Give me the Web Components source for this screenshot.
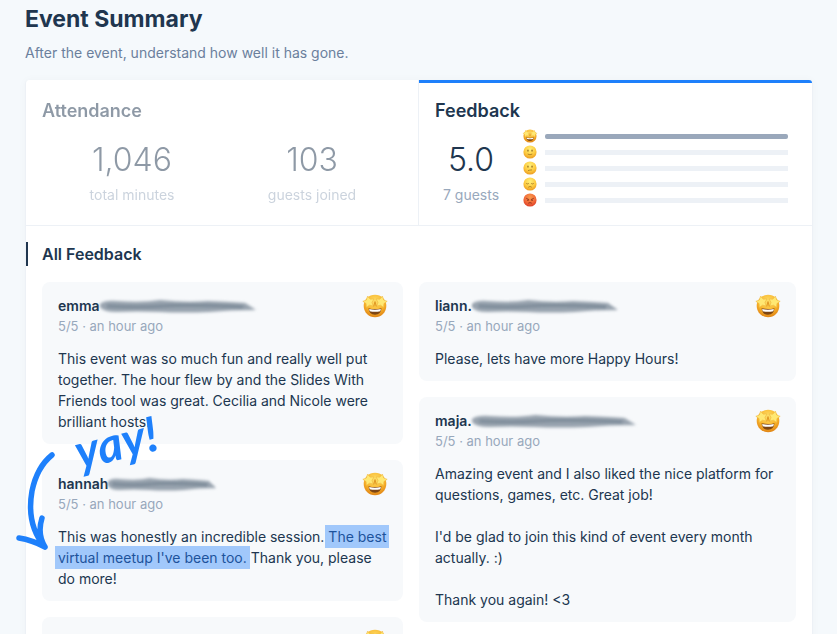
<!DOCTYPE html>
<html lang="en">
<head>
<meta charset="utf-8">
<meta name="viewport" content="width=device-width, initial-scale=1">
<title>Event Summary</title>
<style>
  :root {
    --ink: #20364f;
    --muted: #6b809c;
    --soft: #98a8bc;
    --line: #edf1f6;
    --card: #f7f9fb;
    --blue: #1e80fb;
  }

  body {
    margin: 0;
    background: #f5f9fc;
    color: var(--ink);
    font-family: Inter, "Liberation Sans", sans-serif;
    font-size: 14px;
    line-height: 21px;
  }
</style>
</head>
<body>
<event-summary>
  <span slot="title">Event Summary</span>
  <span slot="subtitle">After the event, understand how well it has gone.</span>

  <summary-tab slot="tabs" label="Attendance">
    <stat-value value="1,046">total minutes</stat-value>
    <stat-value value="103">guests joined</stat-value>
  </summary-tab>
  <summary-tab slot="tabs" label="Feedback" active>
    <stat-value class="score" value="5.0">7 guests</stat-value>
    <rating-bars></rating-bars>
  </summary-tab>

  <span slot="section">All Feedback</span>

  <feedback-card slot="left" name="emma" smudge="158">This event was so much fun and really well put together. The hour flew by and the Slides With Friends tool was great. Cecilia and Nicole were brilliant hosts.</feedback-card>
  <feedback-card slot="left" name="hannah" smudge="110">This was honestly an incredible session. <text-highlight>The best virtual meetup I've been too.</text-highlight> Thank you, please do more!<pen-note slot="note">yay!</pen-note></feedback-card>
  <feedback-card slot="left" name="" smudge="0"></feedback-card>

  <feedback-card slot="right" name="liann." smudge="148">Please, lets have more Happy Hours!</feedback-card>
  <feedback-card slot="right" name="maja." smudge="166">Amazing event and I also liked the nice platform for questions, games, etc. Great job!<br><br>I'd be glad to join this kind of event every month actually. :)<br><br>Thank you again! &lt;3</feedback-card>
</event-summary>

<script>
const STAR = "0,-6 2,-2.500 5.700,-1.900 3,1 3.500,4.900 0,3.200 -3.500,4.900 -3,1 -5.700,-1.900 -2,-2.500";

const FACES = {
  starstruck: /* html */`
    <path d="M5.500 14.200q6.500 1.800 13 0q-.6 6.500-6.500 6.500t-6.500-6.500z" fill="#7d4512"/>
    <path d="M6.100 14.900q5.900 1.500 11.800 0l-.6 2.300q-5.300 1-10.600 0z" fill="#fff"/>
    <g fill="#ffe873" stroke="#eeb23a" stroke-width=".5" stroke-linejoin="round">
      <polygon points="${STAR}" transform="translate(5.800 8) rotate(-12)"/>
      <polygon points="${STAR}" transform="translate(18.200 8) rotate(12)"/>
    </g>
    <path d="M10.800 12.500L12 7.500l1.200 5" fill="none" stroke="#d98a16" stroke-width=".8"/>`,
  happy: /* html */`
    <g opacity=".75"><ellipse cx="8.500" cy="9.500" rx="1.200" ry="2" fill="#7c5012"/><ellipse cx="15.500" cy="9.500" rx="1.200" ry="2" fill="#7c5012"/>
    <path d="M8 15.500q4 2.500 8 0" fill="none" stroke="#7c5012" stroke-width="1.300"/></g>`,
  unsure: /* html */`
    <g opacity=".75"><ellipse cx="8.500" cy="9.500" rx="1.200" ry="2" fill="#7c5012"/><ellipse cx="15.500" cy="9.500" rx="1.200" ry="2" fill="#7c5012"/>
    <path d="M8.500 16.500q3-1.200 7-1.200" fill="none" stroke="#7c5012" stroke-width="1.300"/></g>`,
  sad: /* html */`
    <path d="M5.500 11q2.500 1.800 4.500 0M14 11q2 1.800 4.500 0M9 17.500q3-2.500 6 0" fill="none" stroke="#7c5012" stroke-width="1.300" opacity=".75"/>`,
  angry: /* html */`
    <g opacity=".8"><path d="M5.500 9l5 2.500M18.500 9l-5 2.500M9 17.500q3-2.200 6 0" fill="none" stroke="#6d1c10" stroke-width="1.400"/>
    <circle cx="8.500" cy="12.500" r="1.300" fill="#6d1c10"/><circle cx="15.500" cy="12.500" r="1.300" fill="#6d1c10"/></g>`
};

class BaseElement extends HTMLElement {
  connectedCallback() {
    if (!this.shadowRoot) this.attachShadow({ mode: "open" });
    this.shadowRoot.innerHTML = `<style>${this.constructor.styles}</style>${this.render()}`;
  }
}

class MoodFace extends BaseElement {
  static get styles() {
    return /* css */`
      :host { display: block; width: 14px; height: 14px; }
      :host([large]) { width: 24px; height: 24px; }
      svg { display: block; width: 100%; height: 100%; overflow: visible; }
    `;
  }

  render() {
    const mood = this.getAttribute("mood") ?? "starstruck";
    const [top, mid, edge] = {
      angry: ["#f79a4b", "#f26b3a", "#dd3f28"],
      starstruck: ["#fde06a", "#f9b52c", "#e08415"]
    }[mood] ?? ["#fff07a", "#fdcb40", "#eb9a20"];
    return /* html */`
      <svg viewBox="0 0 24 24" aria-hidden="true">
        <defs>
          <radialGradient id="skin" cx=".5" cy=".3" r=".7">
            <stop offset="0" stop-color="${top}"/>
            <stop offset=".6" stop-color="${mid}"/>
            <stop offset="1" stop-color="${edge}"/>
          </radialGradient>
        </defs>
        <circle cx="12" cy="12" r="11.300" fill="url(#skin)"/>
        ${FACES[mood]}
      </svg>`;
  }
}

class StatValue extends BaseElement {
  static get styles() {
    return /* css */`
      :host { display: block; flex: 1; text-align: center; }
      :host(.score) { flex: 0 0 72px; }
      strong { display: block; font-size: 32px; line-height: 40px; font-weight: 300; }
      span { display: block; margin-top: 4px; line-height: 21px; color: var(--soft); }
    `;
  }

  render() {
    return `<strong>${this.getAttribute("value")}</strong><span><slot></slot></span>`;
  }
}

class RatingBars extends BaseElement {
  static get styles() {
    return /* css */`
      :host { display: block; flex: 1; padding: 0 8px 0 16px; margin: -12px 0 -4px; }
      div { display: flex; align-items: center; gap: 8px; height: 16px; }
      i { flex: 1; height: 5px; background: var(--line); }
      .full { background: #9aa8bb; border-radius: 2px; }
    `;
  }

  render() {
    return Object.keys(FACES).map((mood, i) =>
      `<div><mood-face mood="${mood}"></mood-face><i class="${i ? "" : "full"}"></i></div>`
    ).join("");
  }
}

class SummaryTab extends BaseElement {
  static get styles() {
    return /* css */`
      :host { display: block; min-width: 0; border-right: 1px solid var(--line); }
      :host([active]) { border-right: 0; }
      button {
        display: block;
        box-sizing: border-box;
        width: 100%;
        height: 100%;
        padding: 16px 16px 20px;
        border: 0;
        border-top: 3px solid transparent;
        background: none;
        color: inherit;
        font: inherit;
        text-align: left;
        cursor: pointer;
      }
      button > * { opacity: 0.5; }
      :host([active]) button { border-top-color: var(--blue); border-radius: 0 3px 0 0; }
      :host([active]) button > * { opacity: 1; }
      .label { display: block; font-size: 18px; line-height: 24px; font-weight: 600; }
      .body { display: flex; margin-top: 17px; }
    `;
  }

  render() {
    return /* html */`
      <button type="button" role="tab" aria-selected="${this.hasAttribute("active")}">
        <span class="label">${this.getAttribute("label")}</span>
        <span class="body"><slot></slot></span>
      </button>`;
  }
}

class FeedbackCard extends BaseElement {
  static get styles() {
    return /* css */`
      :host {
        display: block;
        position: relative;
        padding: 12px 16px;
        border-radius: 8px;
        background: var(--card);
      }
      header { display: flex; justify-content: space-between; margin-bottom: 11px; }
      h3 { display: flex; align-items: center; margin: 0; height: 22px; font-size: 14px; font-weight: 600; }
      h3 svg { display: block; height: 21px; margin-left: -1px; overflow: visible; }
      .meta { display: block; min-height: 21px; font-size: 13px; color: var(--soft); }
      p { margin: 0; min-height: 21px; }
    `;
  }

  smudge() {
    const width = Number(this.getAttribute("smudge"));
    if (!width) return "";
    return /* html */`
      <svg width="${width}" viewBox="0 0 160 21" preserveAspectRatio="none" aria-hidden="true">
        <defs><filter id="soft" x="-10%" y="-30%" width="120%" height="160%"><feGaussianBlur stdDeviation="1.400"/></filter></defs>
        <g filter="url(#soft)">
          <path d="M1 9Q6 5 18 6Q44 8 62 5Q88 8 110 6Q136 7 148 8L159 15Q132 15 112 17Q84 18 62 17Q38 16 18 17Q4 17 1 12Z" fill="#8e9aa6" opacity=".9"/>
          <path d="M8 11Q40 13 65 11T146 12" fill="none" stroke="#7b8a98" stroke-width="3"/>
        </g>
      </svg>`;
  }

  render() {
    const name = this.getAttribute("name");
    return /* html */`
      <header>
        <div>
          <h3>${name}${this.smudge()}</h3>
          <span class="meta">${name ? "5/5 · an hour ago" : ""}</span>
        </div>
        <mood-face large></mood-face>
      </header>
      <p><slot></slot></p>
      <slot name="note"></slot>`;
  }
}

class TextHighlight extends BaseElement {
  static get styles() {
    return /* css */`
      :host { display: inline; }
      mark {
        padding: 3px;
        margin: 0 -3px;
        background: #a1c8fb;
        color: #1d539b;
        -webkit-box-decoration-break: clone;
        box-decoration-break: clone;
      }
    `;
  }

  render() {
    return `<mark><slot></slot></mark>`;
  }
}

// Pen note that lies over the cards: a word with an arrow curving down to the text
class PenNote extends BaseElement {
  static get styles() {
    return /* css */`
      :host { position: absolute; left: -28px; top: -50px; color: var(--blue); pointer-events: none; }
      svg { display: block; width: 150px; height: 145px; }
      span {
        position: absolute;
        left: 60px;
        top: 4px;
        font-family: Lato, sans-serif;
        font-size: 48px;
        line-height: 56px;
        font-style: italic;
        font-weight: 700;
        transform: rotate(-14deg);
      }
    `;
  }

  render() {
    return /* html */`
      <svg viewBox="0 0 150 145" aria-hidden="true">
        <path d="M38 45Q23 57 18 81Q12 115 31 137M5 128Q18 130 31 137M28 108Q23 124 31 137" fill="none" stroke="currentColor" stroke-width="5.500" stroke-linecap="round" stroke-linejoin="round"/>
      </svg>
      <span><slot></slot></span>`;
  }
}

class EventSummary extends BaseElement {
  static get styles() {
    return /* css */`
      :host { display: block; padding: 3px 24px 0 25px; }
      h1 { margin: 0; font-size: 23px; line-height: 32px; font-weight: 700; }
      .subtitle { margin: 7px 0 17px; color: var(--muted); }
      .panel {
        border: 1px solid var(--line);
        border-top: 0;
        border-radius: 4px;
        background: #fff;
        box-shadow: 0 0 8px #20364f08;
      }
      .tabs { display: grid; grid-template-columns: 1fr 1fr; border-bottom: 1px solid var(--line); }
      h2 {
        margin: 16px 0;
        padding-left: 14px;
        border-left: 2px solid var(--ink);
        font-size: 16px;
        line-height: 24px;
        font-weight: 600;
      }
      .columns { display: grid; grid-template-columns: 1fr 1fr; padding: 0 16px 16px; }
      .column { display: flex; flex-direction: column; gap: 16px; min-width: 0; }
      .column:first-child { padding-right: 16px; }
    `;
  }

  render() {
    return /* html */`
      <h1><slot name="title"></slot></h1>
      <p class="subtitle"><slot name="subtitle"></slot></p>
      <section class="panel">
        <div class="tabs" role="tablist"><slot name="tabs"></slot></div>
        <h2><slot name="section"></slot></h2>
        <div class="columns">
          <div class="column"><slot name="left"></slot></div>
          <div class="column"><slot name="right"></slot></div>
        </div>
      </section>`;
  }
}

customElements.define("mood-face", MoodFace);
customElements.define("stat-value", StatValue);
customElements.define("rating-bars", RatingBars);
customElements.define("summary-tab", SummaryTab);
customElements.define("feedback-card", FeedbackCard);
customElements.define("text-highlight", TextHighlight);
customElements.define("pen-note", PenNote);
customElements.define("event-summary", EventSummary);
</script>
</body>
</html>
